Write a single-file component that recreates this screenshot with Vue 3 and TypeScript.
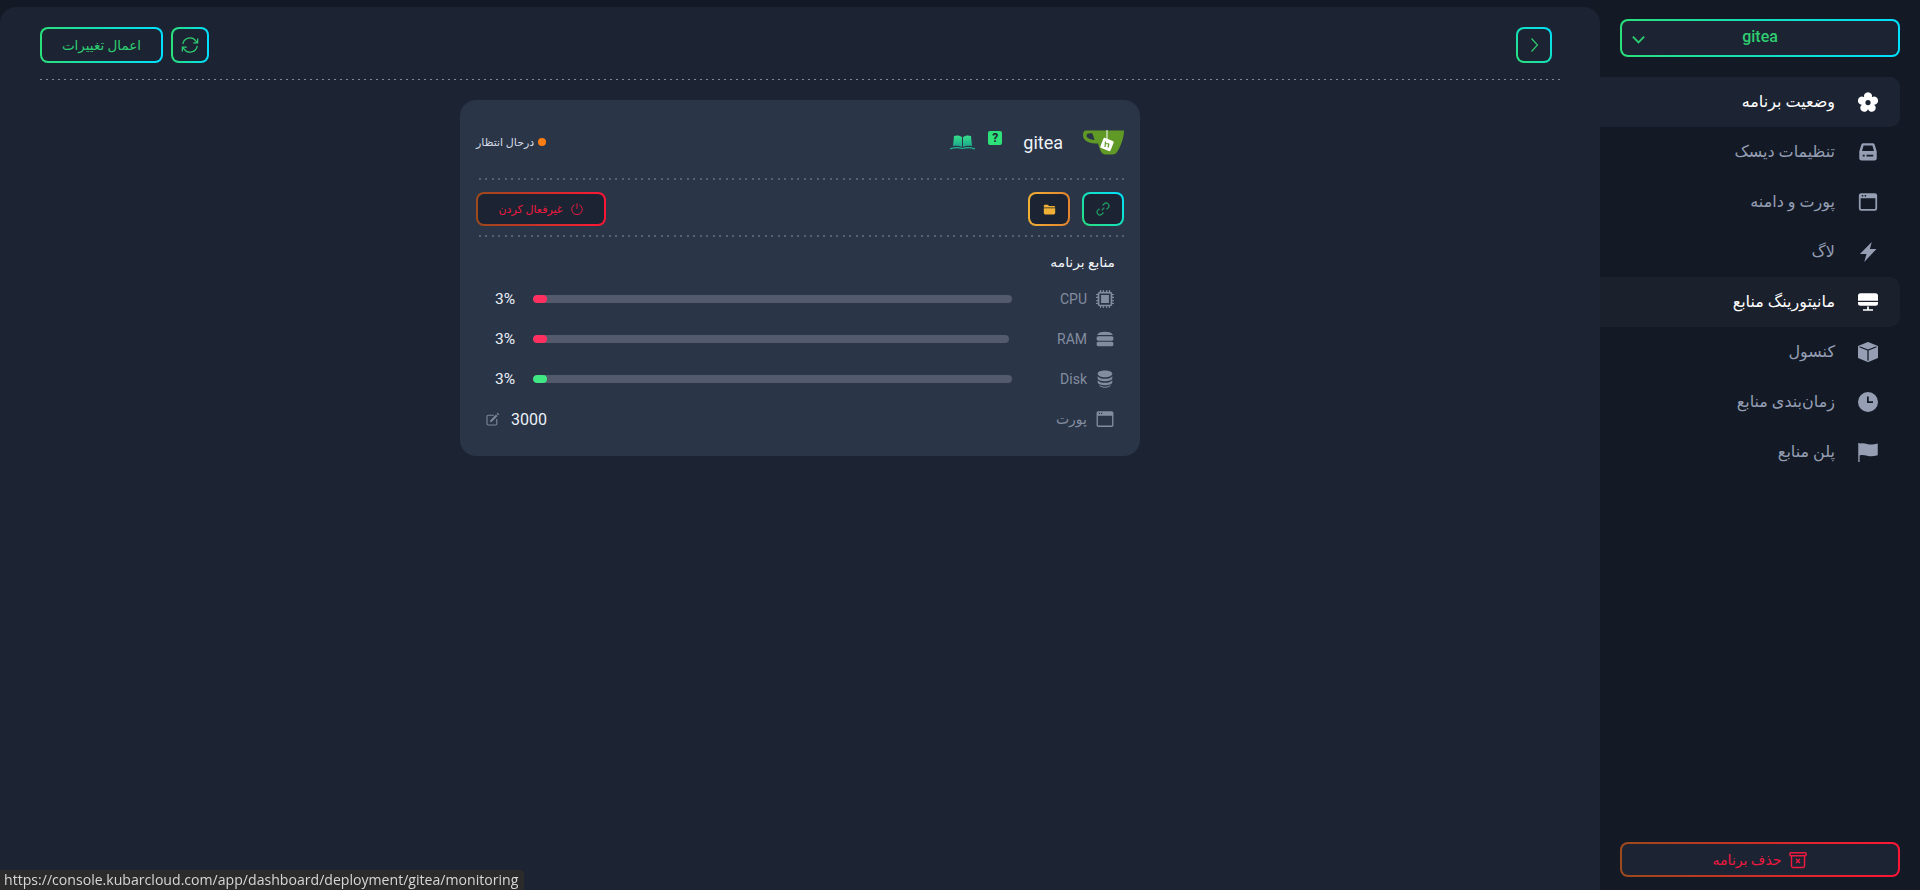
<template>
  <div class="page" dir="rtl">
    <!-- sidebar -->
    <aside class="sidebar">
      <div>
        <button class="app-select grad-green">
          <span>gitea</span>
          <svg class="select-chevron" viewBox="0 0 16 16" width="15" height="15" fill="none" stroke="currentColor" stroke-width="2">
            <path d="M2 5 8 11l6-6" />
          </svg>
        </button>
        <nav class="nav">
          <a v-for="item in navItems" :key="item.label" class="nav-item" :class="item.state">
            <svg viewBox="0 0 16 16" width="20" height="20" fill="currentColor" fill-rule="evenodd">
              <path :d="item.icon" />
            </svg>
            <span>{{ item.label }}</span>
          </a>
        </nav>
      </div>
      <button class="delete-btn grad-red">
        <svg viewBox="0 0 16 16" width="18" height="18" fill="none" stroke="currentColor" stroke-width="1.3">
          <rect x="0.8" y="1.6" width="14.4" height="2.6" rx="0.8" />
          <path d="M2.2 4.2v9.2a1.2 1.2 0 0 0 1.2 1.2h9.2a1.2 1.2 0 0 0 1.2-1.2V4.2" />
          <path d="m6.3 7.2 3.4 3.4m0-3.4-3.4 3.4" />
        </svg>
        <span>حذف برنامه</span>
      </button>
    </aside>

    <!-- main panel -->
    <main class="main">
      <header class="toolbar">
        <button class="icon-btn grad-green-r">
          <svg viewBox="0 0 16 16" width="16" height="16" fill="none" stroke="currentColor" stroke-width="1.2">
            <path d="m5.5 1.5 6 6.5-6 6.5" />
          </svg>
        </button>
        <div class="toolbar-actions">
          <button class="icon-btn refresh grad-green">
            <svg viewBox="0 0 16 16" width="18" height="18" fill="none" stroke="currentColor" stroke-width="1.1">
              <path d="M1.6 7.2A6.4 6.4 0 0 1 13.2 4.4l1.2 1.5" />
              <path d="M14.8 2.2v3.9h-3.9" />
              <path d="M14.4 8.8A6.4 6.4 0 0 1 2.8 11.6l-1.2-1.5" />
              <path d="M1.2 13.8V9.9h3.9" />
            </svg>
          </button>
          <button class="apply-btn grad-green">اعمال تغییرات</button>
        </div>
      </header>
      <div class="main-rule"></div>

      <section class="card">
        <div class="card-head">
          <svg class="logo" viewBox="0 0 41 25" width="41" height="25">
            <path d="M3 .5h38c0 7-3 15-6 20-2 3-3 4-6 4h-6c-3 0-5-2-6-5l-2-6C8 13.500 0 12 0 5 0 2 1 .5 3 .5Z" fill="#609926" />
            <path d="M9.500 3.500C6 3 3.500 3.500 3.500 5.500c0 2.500 3.500 4 8 4.500Z" fill="#2a3547" />
            <path d="M24 0v9" stroke="#fff" stroke-width="1" />
            <rect x="18.500" y="9" width="11" height="11" rx="1.500" transform="rotate(22 24 14.500)" fill="#fff" />
            <path d="M22.500 11.500 22 17M26 13.500 25 17.500M22.500 13.500l3.500.5" stroke="#609926" stroke-width="1.200" fill="none" />
          </svg>
          <span class="app-name">gitea</span>
          <span class="help">?</span>
          <svg class="book" viewBox="0 0 25 15" width="25" height="15">
            <defs>
              <linearGradient id="bookFill" x1="0" y1="0" x2="0" y2="1">
                <stop offset="0" stop-color="#35e08a" />
                <stop offset="1" stop-color="#1ba58c" />
              </linearGradient>
            </defs>
            <path d="M4 1c3-1 6-.5 8 1v10c-2-1-5-1.500-9-1Z" fill="url(#bookFill)" />
            <path d="M21 1c-3-1-6-.5-8 1v10c2-1 5-1.500 9-1Z" fill="url(#bookFill)" />
            <path d="M0 14c4-1.500 9-1.500 12.500-.5C16 12.500 21 12.500 25 14" stroke="#1fb592" stroke-width="1.200" fill="none" />
          </svg>
          <div class="status">
            <span class="status-dot"></span>
            <span>درحال انتظار</span>
          </div>
        </div>

        <div class="card-rule"></div>

        <div class="card-actions">
          <button class="square-btn grad-cyan">
            <svg viewBox="0 0 16 16" width="14" height="14" fill="none" stroke="#1fa564" stroke-width="1.300">
              <path d="M6.500 9.500 9.500 6.500" />
              <path d="M7.500 4 9.300 2.200a3 3 0 0 1 4.500 4.500L12 8.500" />
              <path d="M8.500 12 6.700 13.800a3 3 0 0 1-4.500-4.500L4 7.500" />
            </svg>
          </button>
          <button class="square-btn grad-amber">
            <svg viewBox="0 0 16 16" width="13" height="13" fill="#efb035">
              <path d="M1 3.500A1.500 1.500 0 0 1 2.500 2h3.300L7.500 3.700h6A1.500 1.500 0 0 1 15 5.200v.3H1Z" />
              <path d="M1 6.500h14v5.800a1.700 1.700 0 0 1-1.700 1.700H2.700A1.700 1.700 0 0 1 1 12.300Z" />
            </svg>
          </button>
          <button class="disable-btn grad-red">
            <svg viewBox="0 0 16 16" width="14" height="14" fill="none" stroke="currentColor" stroke-width="1.100">
              <path d="M8 1.500v6.500" />
              <path d="M5 3.200a6 6 0 1 0 6 0" />
            </svg>
            <span>غیرفعال کردن</span>
          </button>
        </div>

        <div class="card-rule"></div>

        <h3 class="resources-title">منابع برنامه</h3>

        <div v-for="res in resources" :key="res.name" class="res-row">
          <svg viewBox="0 0 16 16" width="18" height="18" fill="currentColor" fill-rule="evenodd" class="res-icon">
            <path :d="res.icon" />
          </svg>
          <span class="res-label">{{ res.name }}</span>
          <div class="res-track" dir="ltr">
            <div class="res-fill" :style="{ width: res.percent + '%', background: res.color }"></div>
          </div>
          <span class="res-value" dir="ltr">{{ res.percent }}%</span>
        </div>

        <div class="res-row port-row">
          <svg viewBox="0 0 16 16" width="18" height="18" fill="currentColor" fill-rule="evenodd" class="res-icon">
            <path :d="windowOutline" />
          </svg>
          <span class="res-label">پورت</span>
          <div class="port-value">
            <span>3000</span>
            <svg viewBox="0 0 16 16" width="14" height="14" fill="#7d8698">
              <path d="M13.500.800 15.200 2.500l-1.300 1.300-1.700-1.700ZM11.500 2.800l1.700 1.700-6.500 6.500-2.300.6.600-2.300Z" />
              <path d="M2.500 3h6.500v1.300H2.500a.7.700 0 0 0-.7.700v8.500a.7.700 0 0 0 .7.700H11a.7.700 0 0 0 .7-.7V8H13v5.500a2 2 0 0 1-2 2H2.500a2 2 0 0 1-2-2V5a2 2 0 0 1 2-2Z" />
            </svg>
          </div>
        </div>
      </section>
    </main>

    <!-- browser link preview -->
    <div class="link-preview" dir="ltr">https://console.kubarcloud.com/app/dashboard/deployment/gitea/monitoring</div>
  </div>
</template>

<script setup lang="ts">
interface NavItem {
  label: string;
  icon: string;
  state?: string;
}

interface Resource {
  name: string;
  icon: string;
  percent: number;
  color: string;
}

const navItems: NavItem[] = [
  {
    label: 'وضعیت برنامه',
    state: 'active',
    icon: 'M4.940 4.290A3.200 3.200 0 1 1 11.060 4.290 3.200 3.200 0 1 1 12.950 10.100 3.200 3.200 0 1 1 8 13.700 3.200 3.200 0 1 1 3.050 10.100 3.200 3.200 0 1 1 4.940 4.290ZM8 6.300a2.100 2.100 0 1 0 0 4.200 2.100 2.100 0 0 0 0-4.200Z',
  },
  {
    label: 'تنظیمات دیسک',
    icon: 'M4.200 1h7.600a1.600 1.600 0 0 1 1.500 1l1.700 5.500v5.300a2 2 0 0 1-2 2H3a2 2 0 0 1-2-2V7.500L2.700 2a1.600 1.600 0 0 1 1.500-1ZM4.500 2.800h7l1.300 4.400H3.200ZM3.800 10.200v1.300h1.500v-1.300ZM6.800 10.200v1.300h5.400v-1.300Z',
  },
  {
    label: 'پورت و دامنه',
    icon: 'M2.500 1h11A1.800 1.800 0 0 1 15.300 2.800v10.400a1.800 1.800 0 0 1-1.800 1.800h-11A1.800 1.800 0 0 1 .7 13.200V2.800A1.800 1.800 0 0 1 2.500 1ZM2.100 5v8a.6.600 0 0 0 .6.600h10.600a.6.600 0 0 0 .6-.6V5ZM3 2.400v1.200h1.200V2.400ZM5.300 2.400v1.200h1.200V2.400Z',
  },
  {
    label: 'لاگ',
    icon: 'M11 0 1.500 9.500h5.300L5 16 14.800 5.500H9.500Z',
  },
  {
    label: 'مانیتورینگ منابع',
    state: 'hover',
    icon: 'M2 1h12a2 2 0 0 1 2 2v4H0V3a2 2 0 0 1 2-2ZM0 8h16v1a2 2 0 0 1-2 2H2a2 2 0 0 1-2-2ZM7.300 11.500h1.400v2.300H12v1.200H4v-1.200h3.300Z',
  },
  {
    label: 'کنسول',
    icon: 'M15.528 2.973a.75.75 0 0 1 .472.696v8.662a.75.75 0 0 1-.472.696l-7.250 2.900a.75.75 0 0 1-.557 0l-7.250-2.900A.75.75 0 0 1 0 12.331V3.669a.75.75 0 0 1 .471-.696L7.443.184l.004-.001.274-.11a.75.75 0 0 1 .558 0l.274.11.004.001 6.971 2.789Zm-1.374.527L8 5.962 1.846 3.500 1 3.839v.4l6.500 2.600v7.922l.5.2.5-.2V6.840l6.500-2.600v-.4l-.846-.339Z',
  },
  {
    label: 'زمان‌بندی منابع',
    icon: 'M8 0a8 8 0 1 0 0 16A8 8 0 0 0 8 0ZM7.200 3.500h1.400v3.800H12v1.400H7.200Z',
  },
  {
    label: 'پلن منابع',
    icon: 'M.200 .800h1.100v15.400H.200ZM1.300 1.300c3.500-1 5.500.5 8 .7 2 .2 4-.3 6.500-.8v9.400c-2.500.7-4.500 1-6.500.8-2.500-.2-4.500-1.700-8-.7Z',
  },
];

const windowOutline =
  'M2 1h12a1.500 1.500 0 0 1 1.500 1.500v11A1.500 1.500 0 0 1 14 15H2a1.500 1.500 0 0 1-1.500-1.500v-11A1.500 1.500 0 0 1 2 1ZM1.700 5v8.500c0 .2.100.3.300.3h12c.2 0 .3-.1.300-.3V5ZM2.500 2.500v1h1v-1ZM4.500 2.500v1h1v-1Z';

const resources: Resource[] = [
  {
    name: 'CPU',
    percent: 3,
    color: '#ff2f60',
    icon: 'M3.500 1.500h9a2 2 0 0 1 2 2v9a2 2 0 0 1-2 2h-9a2 2 0 0 1-2-2v-9a2 2 0 0 1 2-2ZM3 3v10h10V3ZM4.500 4.500h7v7h-7ZM3.500 0h1v1.500h-1ZM6 0h1v1.500H6ZM9 0h1v1.500H9ZM11.500 0h1v1.500h-1ZM3.500 14.500h1V16h-1ZM6 14.500h1V16H6ZM9 14.500h1V16H9ZM11.500 14.500h1V16h-1ZM0 3.500h1.500v1H0ZM0 6h1.500v1H0ZM0 9h1.500v1H0ZM0 11.500h1.500v1H0ZM14.500 3.500H16v1h-1.500ZM14.500 6H16v1h-1.500ZM14.500 9H16v1h-1.500ZM14.500 11.500H16v1h-1.500Z',
  },
  {
    name: 'RAM',
    percent: 3,
    color: '#ff2f60',
    icon: 'M1 4.500C1.500 2.500 4 1.500 8 1.500s6.500 1 7 3ZM2.500 5.500h11A1.800 1.800 0 0 1 15.500 7.500 1.800 1.800 0 0 1 13.500 9.500h-11A1.800 1.800 0 0 1 .5 7.500 1.800 1.800 0 0 1 2.500 5.500ZM2.500 10.500h11a1.800 1.800 0 0 1 2 2 1.800 1.800 0 0 1-2 2h-11a1.800 1.800 0 0 1-2-2 1.800 1.800 0 0 1 2-2Z',
  },
  {
    name: 'Disk',
    percent: 3,
    color: '#3fe882',
    icon: 'M8 .500c3.600 0 6.500 1.200 6.500 2.800S11.600 6.500 8 6.500 1.500 5 1.500 3.300 4.400.500 8 .500ZM1.500 5.500C2.500 7 5 7.800 8 7.800s5.500-.8 6.500-2.300v2C14 9 11.500 10 8 10S2 9 1.500 7.500ZM1.500 9C2.500 10.500 5 11.300 8 11.300s5.500-.8 6.500-2.300v2C14 12.500 11.500 13.500 8 13.500S2 12.500 1.500 11ZM2.500 13.200C3.500 14.200 5.500 14.800 8 14.800s4.500-.6 5.500-1.600C13 14.700 11 15.800 8 15.800s-5-1.100-5.500-2.600Z',
  },
];
</script>

<style scoped>
.page {
  display: flex;
  height: 890px;
  overflow: hidden;
  background: #131a26;
  font-family: Roboto, "DejaVu Sans", sans-serif;
  color: #fff;
}

button {
  font-family: inherit;
  cursor: pointer;
  padding: 0;
}

/* gradient borders */
.grad-green,
.grad-green-r,
.grad-red,
.grad-cyan,
.grad-amber {
  border: 2px solid transparent;
  border-radius: 8px;
  background-origin: border-box;
  background-clip: padding-box, border-box;
}
.grad-green {
  background-image: linear-gradient(#1c2433, #1c2433), linear-gradient(to right, #2ae07a, #00e0ff);
}
.grad-green-r {
  background-image: linear-gradient(#1c2433, #1c2433), linear-gradient(to top right, #2ae07a, #00e0ff);
}
.grad-cyan {
  background-image: linear-gradient(#1c2433, #1c2433), linear-gradient(to top right, #2ae07a, #00e0ff);
}
.grad-amber {
  background-image: linear-gradient(#1c2433, #1c2433), linear-gradient(to right, #efb035, #e5832e);
}
.grad-red {
  background-image: linear-gradient(#1c2433, #1c2433), linear-gradient(to right, #9c4a1c, #ff1535);
  color: #f0183f;
}

/* sidebar */
.sidebar {
  width: 320px;
  flex: none;
  box-sizing: border-box;
  padding: 19px 20px 13px 0;
  display: flex;
  flex-direction: column;
  justify-content: space-between;
}

.app-select {
  position: relative;
  display: block;
  width: 280px;
  margin-right: 0;
  height: 38px;
  color: #2ecc71;
  font-size: 16px;
  font-weight: 500;
}
.app-select span {
  position: relative;
  top: -2px;
}
.select-chevron {
  position: absolute;
  left: 9px;
  top: 11px;
}

.nav {
  margin-top: 20px;
  display: flex;
  flex-direction: column;
}
.nav-item {
  height: 50px;
  display: flex;
  align-items: center;
  gap: 23px;
  padding-right: 22px;
  font-size: 16px;
  color: #959eb3;
  border-radius: 0 10px 10px 0;
  margin-left: -20px;
}
.nav-item span {
  position: relative;
  top: -1px;
}
.nav-item.active {
  background: #1c2433;
  color: #fff;
}
.nav-item.hover {
  background: #1a202c;
  color: #fff;
}

.delete-btn {
  width: 280px;
  height: 35px;
  display: flex;
  align-items: center;
  justify-content: center;
  gap: 8px;
  font-size: 14px;
}

/* main */
.main {
  flex: 1;
  margin-top: 7px;
  box-sizing: border-box;
  padding: 20px 40px 0;
  background: #1c2433;
  border-radius: 16px 16px 0 0;
}

.toolbar {
  display: flex;
  align-items: center;
  justify-content: space-between;
  padding-right: 8px;
  height: 36px;
}
.toolbar-actions {
  display: flex;
  gap: 8px;
}
.icon-btn {
  width: 36px;
  height: 36px;
  display: flex;
  align-items: center;
  justify-content: center;
  color: #2ecc71;
}
.icon-btn.refresh {
  width: 38px;
}
.apply-btn {
  width: 123px;
  height: 36px;
  font-size: 13.500px;
  color: #2ecc71;
}
.main-rule {
  margin-top: 16px;
  height: 1px;
  background: repeating-linear-gradient(to right, #7f8899 0 2px, transparent 2px 6px);
}

/* card */
.card {
  width: 680px;
  box-sizing: border-box;
  margin: 20px auto 0;
  padding: 16px 16px 17px;
  background: #2a3547;
  border-radius: 16px;
}
.card-head {
  display: flex;
  align-items: center;
  height: 52px;
  margin-bottom: 10px;
}
.logo {
  flex: none;
}
.app-name {
  margin-right: 20px;
  font-size: 18px;
  color: #eef2f8;
}
.help {
  margin-right: 21px;
  width: 14px;
  height: 14px;
  position: relative;
  top: -4px;
  border-radius: 2px;
  background: #2ee07a;
  color: #1c2433;
  font-size: 12px;
  font-weight: 700;
  line-height: 14px;
  text-align: center;
}
.book {
  margin-right: 13px;
}
.status {
  margin-right: auto;
  display: flex;
  align-items: center;
  gap: 4px;
  font-size: 11px;
  color: #d5dbe6;
}
.status-dot {
  width: 8px;
  height: 8px;
  border-radius: 50%;
  background: #ff7d12;
}
.card-rule {
  height: 2px;
  background: repeating-linear-gradient(to left, #566173 0 2px, transparent 2px 6.500px);
}
.card-actions {
  display: flex;
  align-items: center;
  gap: 12px;
  height: 34px;
  margin: 12px 0 9px;
}
.square-btn {
  width: 42px;
  height: 34px;
  display: flex;
  align-items: center;
  justify-content: center;
}
.disable-btn {
  margin-right: auto;
  width: 130px;
  height: 34px;
  display: flex;
  align-items: center;
  justify-content: center;
  gap: 7px;
  font-size: 11px;
}

.resources-title {
  margin: 16px 9px 8px 0;
  height: 18px;
  font-size: 13.800px;
  font-weight: 400;
  line-height: 18px;
  color: #f1f4f8;
}
.res-row {
  display: flex;
  align-items: center;
  height: 40px;
  padding: 0 10px 0 19px;
  color: #838da0;
}
.res-icon {
  flex: none;
}
.res-label {
  margin-right: 9px;
  font-size: 14px;
}
.res-track {
  flex: 1;
  margin: 0 48px 0 18px;
  height: 8px;
  border-radius: 4px;
  background: #525a6b;
  overflow: hidden;
}
.res-fill {
  height: 100%;
  border-radius: 4px;
}
.res-value {
  width: 20px;
  font-size: 15.500px;
  color: #eaf0f8;
}
.port-row {
  padding-left: 10px;
}
.port-value {
  margin-right: auto;
  display: flex;
  align-items: center;
  gap: 11px;
  font-size: 16px;
  color: #eaf0f8;
}

/* browser status bubble */
.link-preview {
  position: fixed;
  left: 0;
  bottom: 0;
  height: 20px;
  width: 524px;
  box-sizing: border-box;
  padding-left: 4px;
  background: #2b2b2b;
  border-radius: 0 4px 0 0;
  font-family: "Open Sans", sans-serif;
  font-size: 14.100px;
  line-height: 20px;
  color: #d6d6d6;
  white-space: nowrap;
}
</style>
